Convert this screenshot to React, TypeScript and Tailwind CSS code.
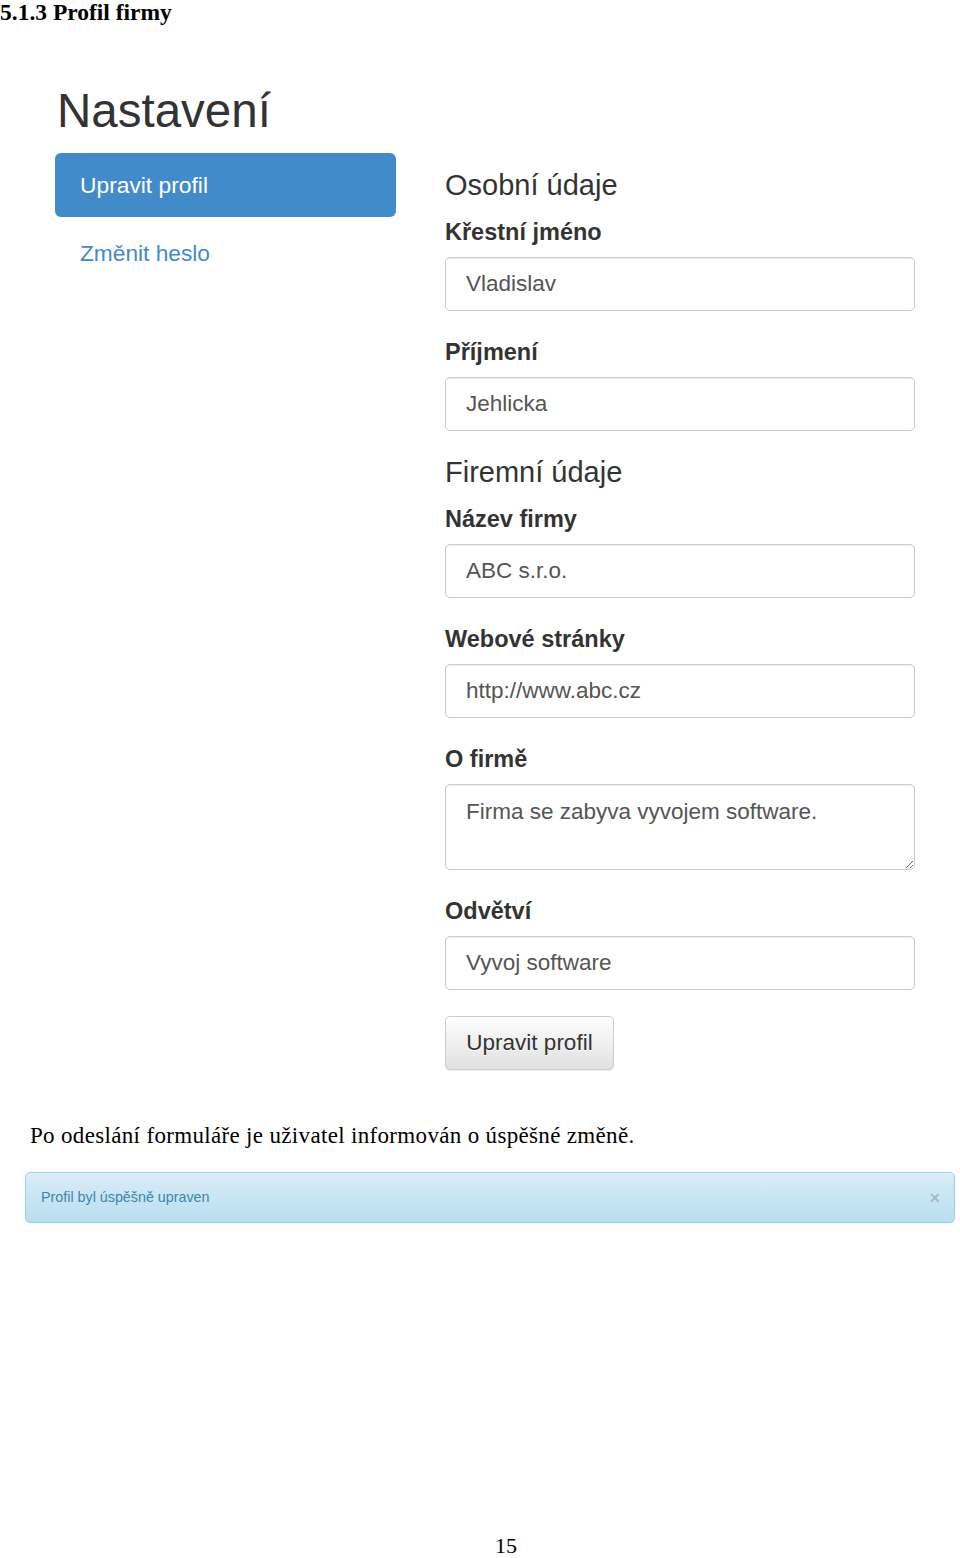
import React from 'react';

const sans = "font-['Liberation_Sans',Arial,sans-serif]";
const serif = "font-['Liberation_Serif','Times_New_Roman',serif]";

interface FieldProps {
    label: string;
    value: string;
    first?: boolean;
    multiline?: boolean;
}

function Field({ label, value, first, multiline }: FieldProps) {
    return (
        <div className={first ? '' : 'mt-[28px]'}>
            <label className="block text-[23.5px] leading-[26px] font-bold text-[#333] mb-[12px]">{label}</label>
            {multiline ? (
                <textarea
                    readOnly
                    defaultValue={value}
                    className="block w-full h-[86px] rounded-[5px] border border-[#ccc] bg-white px-[20px] pt-[11px] text-[22.5px] leading-[32px] text-[#555] shadow-[inset_0_1px_1px_rgba(0,0,0,0.075)] outline-none resize-y"
                />
            ) : (
                <div className="flex items-center h-[54px] rounded-[5px] border border-[#ccc] bg-white px-[20px] text-[22.5px] text-[#555] shadow-[inset_0_1px_1px_rgba(0,0,0,0.075)]">
                    {value}
                </div>
            )}
        </div>
    );
}

export default function App() {
    return (
        <div className="w-[960px] h-[1558px] bg-white flex flex-col overflow-hidden">
            {/* Document heading */}
            <h2 className={`${serif} text-[23.5px] leading-[24px] font-bold text-black`}>5.1.3 Profil firmy</h2>

            {/* Screenshot of the settings page */}
            <div className={`${sans} pl-[55px] mt-[61px]`}>
                <h1 className="text-[47.5px] leading-[52px] text-[#333] pl-[2px]">Nastavení</h1>

                <div className="flex gap-[49px] mt-[16px]">
                    {/* Left nav */}
                    <nav className="w-[341px] flex flex-col">
                        <div className="h-[64px] flex items-center pl-[25px] rounded-[6px] bg-[#428bca] text-white text-[22.8px]">
                            Upravit profil
                        </div>
                        <div className="h-[64px] mt-[4px] flex items-center pl-[25px] text-[#428bca] text-[22.7px]">
                            Změnit heslo
                        </div>
                    </nav>

                    {/* Form */}
                    <div className="w-[470px] pt-[16px]">
                        <h3 className="text-[29px] leading-[32px] text-[#333] mb-[18px]">Osobní údaje</h3>
                        <Field first label="Křestní jméno" value="Vladislav" />
                        <Field label="Příjmení" value="Jehlicka" />

                        <h3 className="text-[29px] leading-[32px] text-[#333] mt-[25px] mb-[18px]">Firemní údaje</h3>
                        <Field first label="Název firmy" value="ABC s.r.o." />
                        <Field label="Webové stránky" value="http://www.abc.cz" />
                        <Field multiline label="O firmě" value="Firma se zabyva vyvojem software." />
                        <Field label="Odvětví" value="Vyvoj software" />

                        <button className="mt-[26px] h-[54px] w-[169px] rounded-[5px] border border-[#ccc] bg-gradient-to-b from-white to-[#e0e0e0] text-[22.5px] text-[#333] [text-shadow:0_1px_0_#fff] shadow-[0_1px_1px_rgba(0,0,0,0.075)]">
                            Upravit profil
                        </button>
                    </div>
                </div>
            </div>

            {/* Document paragraph */}
            <p className={`${serif} mt-[54px] pl-[30px] text-[23px] leading-[24px] tracking-[0.33px] text-black`}>
                Po odeslání formuláře je uživatel informován o úspěšné změně.
            </p>

            {/* Success alert */}
            <div className={`${sans} mt-[24px] ml-[25px] w-[930px] h-[51px] flex items-center justify-between pl-[15px] pr-[14px] rounded-[5px] border border-[#9acfea] bg-gradient-to-b from-[#d9edf7] to-[#b9def0] shadow-[inset_0_1px_0_rgba(255,255,255,0.25),0_1px_2px_rgba(0,0,0,0.05)]`}>
                <span className="text-[14.3px] text-[#3a87ad]">Profil byl úspěšně upraven</span>
                <span className="text-[18px] font-bold text-black/20 leading-none">×</span>
            </div>

            <div className="flex-1" />

            {/* Page number */}
            <div className={`${serif} text-center pl-[52px] text-[22px] leading-[24px] text-black`}>15</div>
        </div>
    );
}
